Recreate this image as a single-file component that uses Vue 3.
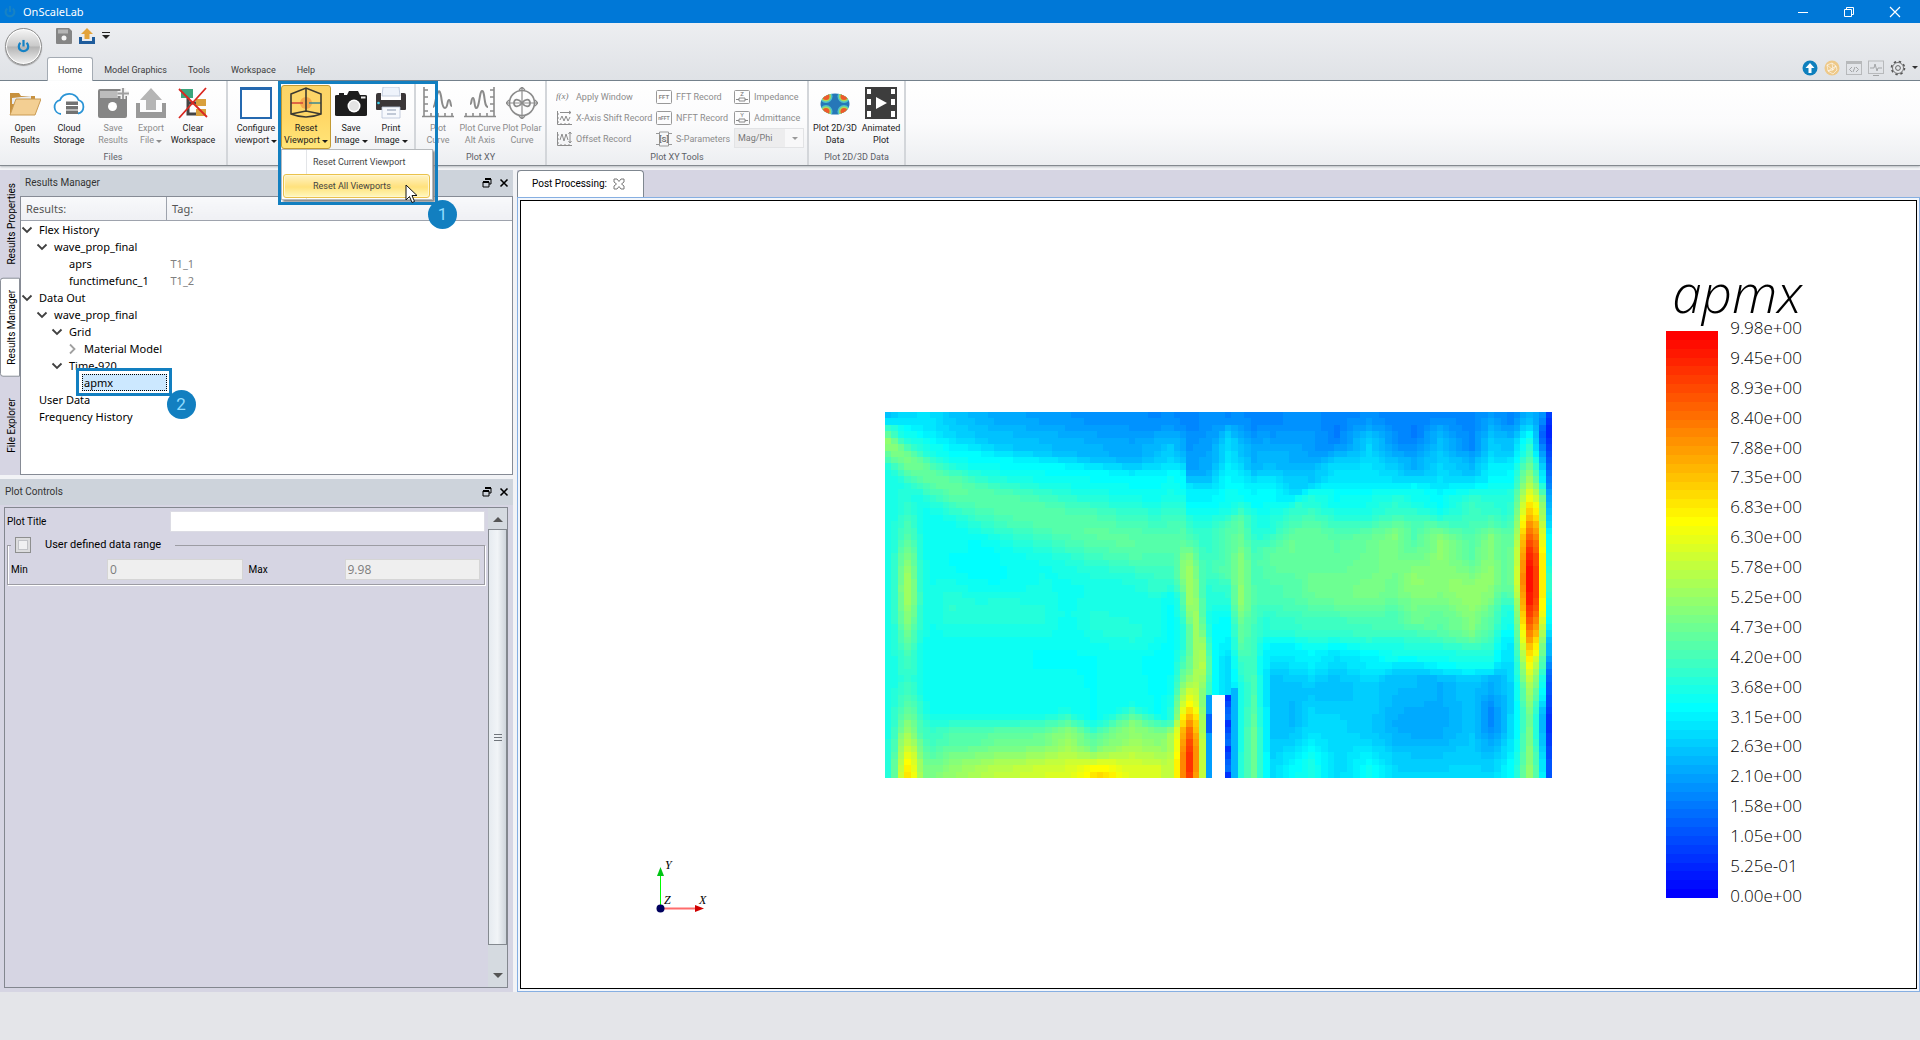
<template>
  <div class="app">
    <header class="titlebar">
      <svg class="titlebar-logo" viewBox="0 0 16 16" v-html="icons.power"></svg>
      <span class="titlebar-name">OnScaleLab</span>
      <div class="window-buttons">
        <button aria-label="Minimize">
          <svg viewBox="0 0 12 12"><path d="M1 6.500h10" stroke="#fff" /></svg>
        </button>
        <button aria-label="Restore">
          <svg viewBox="0 0 12 12" fill="none" stroke="#fff">
            <path d="M1.500 3.500h7v7h-7zM3.500 3.500v-2h7v7h-2" />
          </svg>
        </button>
        <button aria-label="Close">
          <svg viewBox="0 0 12 12">
            <path d="M1 1l10 10M11 1L1 11" stroke="#fff" stroke-width="1.200" />
          </svg>
        </button>
      </div>
    </header>

    <div class="topbar">
      <button class="app-button" aria-label="Application menu">
        <svg viewBox="0 0 16 16" v-html="icons.power"></svg>
      </button>
      <div class="topbar-rows">
        <div class="quick-access">
          <button aria-label="Save">
            <svg viewBox="0 0 16 16">
              <path d="M0 1q0-1 1-1h12l3 3v12q0 1-1 1H1q-1 0-1-1z" fill="#858585" />
              <path d="M2 1.500h10v4H2z" fill="#b5b5b5" />
              <circle cx="8" cy="10" r="2.500" fill="#f4f4f4" />
            </svg>
          </button>
          <button aria-label="Export">
            <svg viewBox="0 0 16 16">
              <path d="M0 9h3v4h10V9h3v7H0z" fill="#1f5c9c" />
              <path d="M8 0l6 6h-3.500v5h-5V6H2z" fill="#e3a33b" />
            </svg>
          </button>
          <button class="qat-more" aria-label="Customize">
            <svg viewBox="0 0 8 8">
              <path d="M0 .5h8" stroke="#222" />
              <path d="M0 3h8L4 7z" fill="#222" />
            </svg>
          </button>
        </div>
        <nav class="menu-tabs">
          <a
            v-for="(tab, i) in menuTabs"
            :key="tab"
            href="#"
            :class="{ active: i === 0 }"
            >{{ tab }}</a
          >
        </nav>
      </div>
      <div class="status-icons">
        <button v-for="s in statusIcons" :key="s.name" :aria-label="s.name">
          <svg viewBox="0 0 16 16" v-html="s.art"></svg>
        </button>
        <svg class="status-caret" viewBox="0 0 6 4"><path d="M0 0h6L3 3z" fill="#333" /></svg>
      </div>
    </div>

    <div class="ribbon">
      <section class="group">
        <div class="group-body">
          <button
            v-for="b in fileButtons"
            :key="b.icon"
            class="big-button"
            :class="b.size"
            :disabled="b.off"
          >
            <svg viewBox="0 0 32 32" v-html="icons[b.icon]"></svg>
            <span>{{ b.top }}</span>
            <span>{{ b.bottom }}<i v-if="b.menu" class="caret"></i></span>
          </button>
        </div>
        <h2>Files</h2>
      </section>

      <section class="group">
        <div class="group-body">
          <button
            v-for="b in viewButtons"
            :key="b.icon"
            class="big-button"
            :class="[b.size, { pressed: b.pressed }]"
          >
            <svg viewBox="0 0 32 32" v-html="icons[b.icon]"></svg>
            <span>{{ b.top }}</span>
            <span>{{ b.bottom }}<i class="caret"></i></span>
          </button>
        </div>
        <div class="dropdown">
          <button>Reset Current Viewport</button>
          <button class="hovered">Reset All Viewports</button>
        </div>
        <div class="callout callout-menu"><span class="badge">1</span></div>
        <svg class="cursor" viewBox="0 0 13 20">
          <path
            d="M1 1v15l3.500-3.500 2.500 6 2.500-1-2.500-6H12z"
            fill="#fff"
            stroke="#111"
          />
        </svg>
      </section>

      <section class="group">
        <div class="group-body flush">
          <button
            v-for="b in plotButtons"
            :key="b.icon"
            class="big-button"
            :class="b.size"
            disabled
          >
            <svg viewBox="0 0 32 32" v-html="icons[b.icon]"></svg>
            <span>{{ b.top }}</span>
            <span>{{ b.bottom }}</span>
          </button>
        </div>
        <h2>Plot XY</h2>
      </section>

      <section class="group">
        <div class="tool-grid">
          <button v-for="t in tools" :key="t.label" class="tool" disabled>
            <svg viewBox="0 0 16 16" v-html="t.art"></svg>{{ t.label }}
          </button>
          <div class="select-wrap">
            <select aria-label="S-Parameters format" disabled>
              <option>Mag/Phi</option>
            </select>
            <span><i class="caret"></i></span>
          </div>
        </div>
        <h2>Plot XY Tools</h2>
      </section>

      <section class="group">
        <div class="group-body flush">
          <button
            v-for="b in dataButtons"
            :key="b.icon"
            class="big-button"
            :class="b.size"
          >
            <svg viewBox="0 0 32 32" v-html="icons[b.icon]"></svg>
            <span>{{ b.top }}</span>
            <span>{{ b.bottom }}</span>
          </button>
        </div>
        <h2>Plot 2D/3D Data</h2>
      </section>
    </div>

    <main class="workspace">
      <aside class="dock">
        <div class="dock-top">
          <div class="side-tabs">
            <button>Results Properties</button>
            <button class="active">Results Manager</button>
            <button>File Explorer</button>
          </div>
          <section class="results">
            <header class="panel-head">
              <span>Results Manager</span>
              <button aria-label="Float"><svg viewBox="0 0 10 10" v-html="icons.float"></svg></button>
              <button aria-label="Close"><svg viewBox="0 0 10 10" v-html="icons.cross"></svg></button>
            </header>
            <div class="tree-frame">
              <table class="tree">
                <thead>
                  <tr>
                    <th>Results:</th>
                    <th>Tag:</th>
                  </tr>
                </thead>
                <tbody>
                  <tr v-for="(row, i) in rows" :key="i">
                    <td>
                      <div class="node" :class="['level-' + row.level, { selected: row.selected }]">
                        <svg class="arrow" viewBox="0 0 12 12">
                          <path
                            v-if="row.state === 'open'"
                            d="M1.500 3.500L6 8l4.500-4.500"
                            fill="none"
                            stroke="#404040"
                            stroke-width="1.800"
                          />
                          <path
                            v-if="row.state === 'closed'"
                            d="M4 1.500L8.500 6 4 10.500"
                            fill="none"
                            stroke="#a0a0a0"
                            stroke-width="1.800"
                          />
                        </svg>
                        <span>{{ row.name }}</span>
                        <div v-if="row.selected" class="callout callout-node">
                          <b class="badge">2</b>
                        </div>
                      </div>
                    </td>
                    <td class="tag">{{ row.tag }}</td>
                  </tr>
                </tbody>
              </table>
            </div>
          </section>
        </div>

        <section class="controls">
          <header class="panel-head">
            <span>Plot Controls</span>
            <button aria-label="Float"><svg viewBox="0 0 10 10" v-html="icons.float"></svg></button>
            <button aria-label="Close"><svg viewBox="0 0 10 10" v-html="icons.cross"></svg></button>
          </header>
          <div class="controls-frame">
            <form class="form" @submit.prevent>
              <div class="title-row">
                <label for="plot-title">Plot Title</label>
                <input id="plot-title" v-model="plotTitle" type="text" />
              </div>
              <fieldset>
                <legend>
                  <input id="user-range" v-model="userRange" type="checkbox" />
                  <label for="user-range">User defined data range</label>
                </legend>
                <div class="range-row">
                  <label for="range-min">Min</label>
                  <input id="range-min" type="text" value="0" :disabled="!userRange" />
                  <label for="range-max">Max</label>
                  <input id="range-max" type="text" value="9.98" :disabled="!userRange" />
                </div>
              </fieldset>
            </form>
            <div class="scrollbar">
              <button aria-label="Scroll up">
                <svg viewBox="0 0 10 6"><path d="M0 6l5-5 5 5z" fill="#555" /></svg>
              </button>
              <div class="thumb"><i></i></div>
              <button class="down" aria-label="Scroll down">
                <svg viewBox="0 0 10 6"><path d="M0 0l5 5 5-5z" fill="#555" /></svg>
              </button>
            </div>
          </div>
        </section>
      </aside>

      <section class="document">
        <div class="doc-tabs">
          <div class="doc-tab">
            <span>Post Processing:</span>
            <button aria-label="Close tab">
              <svg viewBox="0 0 12 12">
                <path
                  d="M1 1h3l2 2.500L8 1h3v3L8.500 6 11 8v3H8L6 8.500 4 11H1V8l2.500-2L1 4z"
                  fill="#fff"
                  stroke="#777"
                />
              </svg>
            </button>
          </div>
        </div>
        <div class="doc-frame">
          <div class="viewport">
            <canvas ref="plot" class="heatmap" :width="COLS" :height="ROWS"></canvas>
            <div class="legend">
              <div class="legend-title">apmx</div>
              <div class="legend-body">
                <div class="legend-bar">
                  <i v-for="(c, i) in bands" :key="i" :style="{ background: c }"></i>
                </div>
                <ol class="legend-labels">
                  <li v-for="l in legendLabels" :key="l">{{ l }}</li>
                </ol>
              </div>
            </div>
            <svg class="axes" viewBox="0 0 60 60">
              <path d="M11.500 50V15" stroke="#0f0" />
              <path d="M8 17l3.500-9L15 17z" fill="#00c414" />
              <path d="M12 49.500h36" stroke="#ff6c6c" stroke-width="2" />
              <path d="M46 46l9 3.500-9 3.500z" fill="#d00000" />
              <circle cx="11.500" cy="49.500" r="4" fill="#00005e" />
              <g font-family="Liberation Serif, serif" font-style="italic" font-size="12">
                <text x="16" y="10">Y</text>
                <text x="15" y="45">Z</text>
                <text x="50" y="45">X</text>
              </g>
            </svg>
          </div>
        </div>
      </section>
    </main>
    <footer class="statusbar"></footer>
  </div>
</template>

<script setup>
import { ref, onMounted } from "vue";

const plot = ref(null);
const plotTitle = ref("");
const userRange = ref(false);

const menuTabs = ["Home", "Model Graphics", "Tools", "Workspace", "Help"];

const icons = {
  power:
    '<path d="M4.800 4.200a5 5 0 1 0 6.400 0" fill="none" stroke="#1682c5" stroke-width="2.400"/><path d="M8 1v7" stroke="#1682c5" stroke-width="2.400"/>',
  float:
    '<path d="M3 1h6v5H7M1 4h6v5H1z" fill="none" stroke="#000"/><path d="M3 1h6M1 4h6" stroke="#000" stroke-width="2"/>',
  cross: '<path d="M1.500 1.500l7 7M8.500 1.500l-7 7" stroke="#000" stroke-width="1.600"/>',
  open: '<path d="M1 6h9l2 3h14v6H6L2 26H1z" fill="#c7913f"/><path d="M3 11l19-2v8H3z" fill="#e9edf2"/><path d="M7 12h25l-6 16H1z" fill="#f3cf93" stroke="#c99a52"/>',
  cloud:
    '<path d="M8 27a7 7 0 0 1-1-13.800A10 10 0 0 1 25.500 13 7 7 0 0 1 25 26.500" fill="#fff" stroke="#2a94d6" stroke-width="1.800"/><path d="M13 14.500h12v3.500H13zM13 19h12v3.500H13zM13 23.500h12V27H13z" fill="#727272"/>',
  save: '<path d="M1 4q0-2 2-2h24v6h3v21q0 2-2 2H3q-2 0-2-2z" fill="#858585"/><path d="M3 4h18v7H3z" fill="#bcbcbc"/><circle cx="15.500" cy="19.500" r="4.500" fill="#fff"/><path d="M26 1v11M20.500 6.500H32" stroke="#f2f2f2" stroke-width="5"/><path d="M26 1v11M20.500 6.500H32" stroke="#a0a0a0" stroke-width="2"/>',
  exportFile:
    '<path d="M1 16h4v9h22v-9h4v15H1z" fill="#999"/><path d="M16 1l11 12h-6v10H11V13H5z" fill="#b5b5b5"/>',
  clear:
    '<path d="M11 10v17h9M11 16h9" fill="none" stroke="#444" stroke-width="3"/><path d="M4 2h12v9H4z" fill="#3ca57c"/><path d="M19 12h10v7H19zM19 22h10v7H19z" fill="#d9a03d"/><path d="M2 2l28 28M29 1L2 31" stroke="#da2720" stroke-width="1.800"/>',
  configure:
    '<path d="M1 1h30v30H1z" fill="#fff" stroke="#2569b0" stroke-width="2"/><path d="M0 1.500h32" stroke="#2569b0" stroke-width="3"/>',
  reset:
    '<circle cx="16" cy="16" r="6" fill="#f6a94c"/><path d="M1 16h12" stroke="#d84b3c" stroke-width="1.600"/><path d="M19 16h12" stroke="#4a8c8e" stroke-width="1.600"/><path d="M1 7l15-6 15 6v20q-15 6-30 0zM16 1v24M1 27l15-3 15 3" fill="none" stroke="#3c3a30" stroke-width="1.600"/>',
  camera:
    '<path d="M0 9q0-1 2-1h10l2-4h9l2 4h5q2 0 2 1v19q0 1-2 1H2q-2 0-2-1z" fill="#1d1d1d"/><path d="M4 6h5v3H4z" fill="#1d1d1d"/><circle cx="19" cy="19" r="6.500" fill="#fff"/><circle cx="19" cy="19" r="5" fill="#e4e4e4"/><path d="M26 9.500h4.500v2H26z" fill="#eee"/>',
  printer:
    '<path d="M8 0h16l1 9H7z" fill="#eef3fb" stroke="#b6c2d6" stroke-width=".8"/><path d="M1 8q0-2 2-2h3v7h20V6h3q2 0 2 2v14q0 1-1 1h-5v-2H7v2H2q-1 0-1-1z" fill="#3b3738"/><circle cx="3.500" cy="16" r="1.300" fill="#3bd0ee"/><path d="M7 20h18v11H7z" fill="#f7f9fd" stroke="#b6c2d6" stroke-width=".8"/><path d="M12 23h9M12 27h9" stroke="#8b99b0"/>',
  curve:
    '<path d="M2 0v30M0 29.500h32M2 3h4M2 10h4M2 17h4M2 24h4M9 30v-4M16 30v-4M23 30v-4M30 30v-4" fill="none" stroke="#8b8b8b" stroke-width="1.600"/><path d="M11 20c2 0 2-6 4-12s3-4 4 1 1 12 4 12 2-8 4-8 1 6 3 6" fill="none" stroke="#8b8b8b" stroke-width="2"/>',
  curveAlt:
    '<path d="M30 0v30M0 29.500h32M26 3h4M26 10h4M26 17h4M26 24h4M2 30v-4M9 30v-4M16 30v-4M23 30v-4" fill="none" stroke="#8b8b8b" stroke-width="1.600"/><path d="M6 17c2 0 1-6 3-6s1 9 3 10 3-6 4-12 3-7 4-1 1 12 4 12" fill="none" stroke="#8b8b8b" stroke-width="2"/>',
  polar:
    '<circle cx="16" cy="16" r="12.500" fill="none" stroke="#8b8b8b" stroke-width="1.600"/><path d="M16 0v32M0 16h32M13 3l3-3 3 3M13 29l3 3 3-3M3 13l-3 3 3 3M29 13l3 3-3 3" fill="none" stroke="#8b8b8b" stroke-width="1.200"/><path d="M16 16c-3-4-8-5-8 0s5 4 8 0 8-5 8 0-5 4-8 0z" fill="none" stroke="#8b8b8b" stroke-width="1.800"/>',
  plot3d:
    '<clipPath id="drum"><ellipse cx="16" cy="17" rx="14.500" ry="10.500"/></clipPath><g clip-path="url(#drum)"><path d="M0 0h32v32H0z" fill="#2677b8"/><g fill="#4fc3c9"><circle cx="7" cy="9.500" r="6.500"/><circle cx="25" cy="9.500" r="6.500"/><circle cx="7" cy="24.500" r="6.500"/><circle cx="25" cy="24.500" r="6.500"/></g><g fill="#a8dc5a"><circle cx="7" cy="9.500" r="5"/><circle cx="25" cy="9.500" r="5"/><circle cx="7" cy="24.500" r="5"/><circle cx="25" cy="24.500" r="5"/></g><g fill="#ee5a2c"><circle cx="7" cy="9.500" r="3.500"/><circle cx="25" cy="9.500" r="3.500"/><circle cx="7" cy="24.500" r="3.500"/><circle cx="25" cy="24.500" r="3.500"/></g></g>',
  film: '<path d="M0 0h32v32H0z" fill="#3d3d3d"/><path d="M2 2h4v5H2zM2 12h4v6H2zM2 24h4v6H2zM26 2h4v5h-4zM26 12h4v6h-4zM26 24h4v6h-4z" fill="#fff"/><path d="M11 10l11 6-11 6z" fill="#fff"/>',
};

const boxed = (label, size) =>
  `<rect x=".5" y="1.500" width="15" height="13" rx="1" fill="none" stroke="#999"/><text x="8" y="10" text-anchor="middle" font-family="Roboto, sans-serif" font-weight="700" font-size="${size}" fill="#888">${label}</text>`;

const meter = (label) =>
  `<rect x=".5" y="1.500" width="15" height="13" rx="1" fill="none" stroke="#999"/><text x="8" y="7" text-anchor="middle" font-family="Roboto, sans-serif" font-size="6" fill="#777">${label}</text><path d="M2 10.500h3m6 0h3M5 9h6v3H5z" fill="none" stroke="#888"/>`;

const statusIcons = [
  {
    name: "Update",
    art: '<circle cx="8" cy="8" r="7.500" fill="#0f80bd"/><path d="M8 3l4.500 5H9.500v5h-3V8H3.500z" fill="#fff"/>',
  },
  {
    name: "Network",
    art: '<circle cx="8" cy="8" r="7.500" fill="#eec989"/><path d="M3 5l5-2 4 3-3 4-5 1zM8 3l1 7M3 5l6 5M12 6L4 11l5 3 4-4z" fill="none" stroke="#fff" stroke-width=".6"/>',
  },
  {
    name: "Script",
    art: '<rect x=".5" y="1.500" width="15" height="13" fill="none" stroke="#b7b9bb"/><path d="M0 2.500h16" stroke="#b7b9bb" stroke-width="3"/><path d="M6 7L3.500 9.500 6 12m4-5l2.500 2.500L10 12M9 7l-2 5" fill="none" stroke="#a3a5a7"/>',
  },
  {
    name: "Monitor",
    art: '<rect x=".5" y="1" width="15" height="12.500" fill="none" stroke="#b7b9bb"/><path d="M2 8h4l1-4 2 7 1-3h4M5 15.500h6" fill="none" stroke="#a3a5a7"/>',
  },
  {
    name: "Settings",
    art: '<circle cx="8" cy="8" r="6.500" fill="none" stroke="#555" stroke-width="1.600" stroke-dasharray="2.400 2.705"/><circle cx="8" cy="8" r="5.500" fill="#e6e8eb" stroke="#555" stroke-width=".8"/><circle cx="8" cy="8" r="2.400" fill="none" stroke="#555" stroke-width=".9"/>',
  },
];

const fileButtons = [
  { icon: "open", top: "Open", bottom: "Results", size: "w-44" },
  { icon: "cloud", top: "Cloud", bottom: "Storage", size: "w-44" },
  { icon: "save", top: "Save", bottom: "Results", size: "w-44", off: true },
  { icon: "exportFile", top: "Export", bottom: "File", size: "w-32", off: true, menu: true },
  { icon: "clear", top: "Clear", bottom: "Workspace", size: "w-52" },
];

const viewButtons = [
  { icon: "configure", top: "Configure", bottom: "viewport", size: "w-50" },
  { icon: "reset", top: "Reset", bottom: "Viewport", size: "w-50", pressed: true },
  { icon: "camera", top: "Save", bottom: "Image", size: "w-40" },
  { icon: "printer", top: "Print", bottom: "Image", size: "w-40" },
];

const plotButtons = [
  { icon: "curve", top: "Plot", bottom: "Curve", size: "w-44" },
  { icon: "curveAlt", top: "Plot Curve", bottom: "Alt Axis", size: "w-40" },
  { icon: "polar", top: "Plot Polar", bottom: "Curve", size: "w-44" },
];

const dataButtons = [
  { icon: "plot3d", top: "Plot 2D/3D", bottom: "Data", size: "w-52" },
  { icon: "film", top: "Animated", bottom: "Plot", size: "w-40" },
];

const tools = [
  {
    label: "Apply Window",
    art: '<text x="0" y="10" font-family="Liberation Serif, serif" font-style="italic" font-size="9" fill="#777">f(x)</text>',
  },
  { label: "FFT Record", art: boxed("FFT", 6) },
  { label: "Impedance", art: meter("Z") },
  {
    label: "X-Axis Shift Record",
    art: '<path d="M1.500 1v13.500H16M1 4h2M1 8h2M1 12h2M5 15v-2M9 15v-2M13 15v-2M4 2.500h11M13 1l2 1.500L13 4" fill="none" stroke="#8c8c8c"/><path d="M4 10l2-4 2 5 2-5 2 5 2-4" fill="none" stroke="#8c8c8c"/>',
  },
  { label: "NFFT Record", art: boxed("nFFT", 5) },
  { label: "Admittance", art: meter("Y") },
  {
    label: "Offset Record",
    art: '<path d="M1.500 1v13.500H16M1 4h2M1 8h2M1 12h2M5 15v-2M9 15v-2M13 15v-2M14 1v11M12.500 3L14 1l1.500 2M12.500 10l1.500 2 1.500-2" fill="none" stroke="#8c8c8c"/><path d="M4 9l2-6 2 7 2-7 2 6" fill="none" stroke="#8c8c8c"/>',
  },
  {
    label: "S-Parameters",
    art: '<path d="M0 2.500h3m10 0h3M0 13.500h3m10 0h3M3.500 1h9v14h-9z" fill="none" stroke="#999"/><text x="8" y="11" text-anchor="middle" font-family="Roboto, sans-serif" font-weight="700" font-size="8" fill="#777">[S]</text>',
  },
];

const rows = [
  { name: "Flex History", level: 0, state: "open" },
  { name: "wave_prop_final", level: 1, state: "open" },
  { name: "aprs", level: 2, tag: "T1_1" },
  { name: "functimefunc_1", level: 2, tag: "T1_2" },
  { name: "Data Out", level: 0, state: "open" },
  { name: "wave_prop_final", level: 1, state: "open" },
  { name: "Grid", level: 2, state: "open" },
  { name: "Material Model", level: 3, state: "closed" },
  { name: "Time-920", level: 2, state: "open" },
  { name: "apmx", level: 3, selected: true },
  { name: "User Data", level: 0 },
  { name: "Frequency History", level: 0 },
];

const legendLabels = [
  "9.98e+00", "9.45e+00", "8.93e+00", "8.40e+00", "7.88e+00",
  "7.35e+00", "6.83e+00", "6.30e+00", "5.78e+00", "5.25e+00",
  "4.73e+00", "4.20e+00", "3.68e+00", "3.15e+00", "2.63e+00",
  "2.10e+00", "1.58e+00", "1.05e+00", "5.25e-01", "0.00e+00",
];

// blue -> cyan -> yellow -> red in 64 steps
const STEPS = 64;
const STOPS = [
  [0, 0, 255],
  [0, 255, 255],
  [255, 255, 0],
  [255, 0, 0],
];

const colorAt = (value) => {
  const t = Math.max(0, Math.min(1, value));
  const q = Math.round(t * (STEPS - 1)) / (STEPS - 1);
  const pos = q * 3;
  const i = Math.min(2, Math.floor(pos));
  const f = pos - i;
  return STOPS[i].map((v, k) => Math.round(v + (STOPS[i + 1][k] - v) * f));
};

const bands = Array.from(
  { length: STEPS },
  (_, i) => `rgb(${colorAt(1 - i / (STEPS - 1)).join(",")})`
);

const COLS = 104;
const ROWS = 57;

// column, then row/value pairs down that column (value in percent of the range)
const profiles = [
  [0, 0,26, 1,30, 2,40, 4,52, 9,37, 20,36, 30,36, 37,36, 42,36, 50,36, 56,36],
  [2, 0,28, 1,30, 2,35, 6,49, 11,36, 20,35, 30,35, 37,35, 42,35, 50,37, 56,40],
  [5, 0,30, 2,31, 4,36, 8,47, 14,35, 22,35, 30,36, 37,35, 42,35, 48,38, 56,47],
  [7, 0,29, 2,30, 5,35, 9.5,46, 16,35, 22,35, 30,36, 37,34.5, 46,35, 50,41, 56,49],
  [10, 0,26, 3,28, 6,34, 11,46, 18,34.5, 23,34, 30,39, 37,34.5, 46,34.5, 50,44, 56,53],
  [14, 0,24, 3,26, 7,34, 12.5,45, 20.5,34, 25,34, 31,38, 37,34.5, 46,34.5, 50,44, 56,56],
  [17, 0,22, 4,26, 7.5,34, 13.5,45, 22,34, 25,33.5, 30,38, 37,34.5, 46,34.5, 50,46, 56,58],
  [24, 0,21, 5,25, 8.5,34, 15.5,45, 24,35.5, 26,36, 31,38, 37,34, 46,34.5, 50,47, 56,61],
  [28, 0,20, 5,24, 9,34, 17,45, 25,36, 27,35, 31,35, 38,34, 45,35, 50,53, 56,62],
  [32, 0,19, 6,24, 9.5,34, 18,45.5, 26,37, 28,36, 32,38, 38,34, 47,34, 51,46, 56,66],
  [38, 0,19, 6,22, 10.5,34, 20,45.5, 27,37, 29,36, 34,38, 38,35, 44,35, 49,52, 56,62],
  [42, 0,18, 6,25, 10,33, 20,44, 27,40, 29,36, 34,36, 39,33, 46,34, 50,50, 56,62],
  [44, 0,19, 7,28, 10,35, 20,44, 26,40, 29,34, 34,33, 40,32.5, 47,34, 50,50, 56,54],
  [46, 0,17, 5,22, 10,33, 18,42, 24,44, 29,38, 34,34, 40,36, 45,40, 50,46, 56,50],
  [47, 0,17, 8,21, 12,31, 18,38, 24,43, 29,40, 34,36, 40,36, 45,40, 50,46, 56,50],
  [50, 0,19, 8,22, 13,32, 18,39, 24,41, 28,38, 33,34, 38,34, 42,34, 46,34, 56,34],
  [53, 0,18, 4,29, 14,35, 18,44, 24,45, 28,39, 33,33, 39,29, 43,28, 48,30, 56,32],
  [55, 0,19, 6,26, 12,34, 17,46, 24,51, 29,52, 34,46, 39,40, 43,36, 50,37, 56,38],
  [57, 0,17, 7,23, 12,32, 17,38, 23,43, 28,44, 33,42, 40,42, 45,44, 50,48, 56,47],
  [58.5, 0,18, 7,24, 12,33, 17,36, 22,44, 28,43, 33,38, 38,32, 42,33, 50,35, 56,36],
  [60, 0,17, 7,24, 12,33, 17,38, 22,46, 28,43, 33,39, 37,31, 42,25, 50,26, 56,29],
  [63, 0,19, 7,23, 12,28, 15,40, 20,47, 28,44, 33,40, 37,31, 43,25, 47,24, 56,33],
  [66, 0,19, 6,21, 10,26, 13,38, 18,46, 27,47, 33,41, 38,32, 43,26, 48,29, 56,37],
  [70, 0,17, 3,16, 8,29, 13,34, 20,45, 28,48, 33,41, 38,29, 42,25, 48,28, 56,28],
  [75, 0,19, 5,28, 9,30, 14,36, 20,47, 28,49, 33,42, 39,31, 43,27, 49,27, 56,35],
  [79, 0,17, 4,19, 9,28, 14,39, 19,50, 27,48, 32,43, 37,36, 41,25, 48,23, 56,28],
  [82, 0,17, 3,16, 8,23, 12,35, 18,43, 26,52, 31,48, 36,38, 41,25, 48,22, 56,28],
  [86, 0,18, 4,25, 9,29, 14,34, 20,52, 26,51, 33,45, 38,35, 42,23, 48,22, 56,28],
  [91, 0,17, 4,17, 8,24, 14,41, 22,45, 28,53, 33,50, 38,37, 42,26, 48,26, 56,28],
  [94, 0,21, 5,27, 9,32, 14,39, 20,51, 26,52, 32,45, 38,37, 42,22, 47,17, 56,28],
  [97, 0,17, 5,25, 9,32, 14,37, 20,42, 26,42, 31,32, 36,27, 42,26, 48,27, 56,33],
  [100, 0,22, 5,33, 9,37, 14,40, 20,40, 26,38, 31,38, 36,38, 42,38, 48,36, 56,34],
  [102, 0,18, 3,10, 9,22, 14,36, 20,38, 26,36, 31,36, 36,30, 42,26, 48,18, 56,24],
  [103, 0,7, 2,4, 9,11, 14,18, 20,24, 26,27, 31,24, 36,17, 42,8, 48,5, 56,10],
];

// narrow spots laid over the profiles: column, row, column spread, row spread, amount
const spots = [
  [3, 27, 1.2, 7, 19],
  [3, 57, 1.3, 7.5, 27],
  [33.5, 57, 1.8, 1.8, 7],
  [46.8, 24, 1, 4, 9],
  [47.5, 29, 0.9, 3, 9],
  [48.3, 34, 0.9, 3, 13],
  [49, 39, 0.9, 3, 15],
  [47.1, 53, 1.5, 8, 45],
  [100.3, 26, 1.5, 10, 62],
  [100.2, 57, 1.3, 6.5, 18],
];

const profileAt = (col, row) => {
  let n = 0;
  while (n < profiles.length - 2 && profiles[n + 1][0] <= col) n++;
  const a = profiles[n];
  const b = profiles[n + 1];
  const f = (col - a[0]) / (b[0] - a[0]);
  const knots = a.slice(1).map((v, i) => v + (b[i + 1] - v) * f);
  for (let k = 0; k < knots.length - 2; k += 2) {
    const [r0, v0, r1, v1] = knots.slice(k, k + 4);
    if (row <= r1) {
      const s = (row - r0) / (r1 - r0);
      return v0 + (v1 - v0) * s * s * (3 - 2 * s);
    }
  }
  return knots[knots.length - 1];
};

const valueAt = (col, row) => {
  if (row >= 44 && col === 50) return row > 46 && row < 50 ? 13 : 21;
  if (row >= 44 && col === 53) return 6 + (row % 4) * 3;
  if (row >= 43 && col === 54) return 24;
  let v = profileAt(col, row);
  for (const [c, r, sc, sr, amount] of spots) {
    v += amount * Math.exp(-((col - c) ** 2) / (2 * sc * sc) - (row - r) ** 2 / (2 * sr * sr));
  }
  return v;
};

onMounted(() => {
  const ctx = plot.value.getContext("2d");
  for (let row = 0; row < ROWS; row++) {
    for (let col = 0; col < COLS; col++) {
      // the slot in the geometry holds no data
      if (row >= 44 && (col === 51 || col === 52)) continue;
      ctx.fillStyle = `rgb(${colorAt(valueAt(col, row) / 100).join(",")})`;
      ctx.fillRect(col, row, 1, 1);
    }
  }
});
</script>

<style>
body {
  margin: 0;
}
</style>

<style scoped>
.app {
  min-height: 100vh;
  display: flex;
  flex-direction: column;
  background: #e4e5e9;
  color: #1c1c1c;
  font: 10px/12px Roboto, "Liberation Sans", sans-serif;
}

button {
  margin: 0;
  padding: 0;
  border: 0;
  background: none;
  font: inherit;
  color: inherit;
}

svg {
  display: block;
  flex-shrink: 0;
}

/* Title bar */
.titlebar {
  height: 23px;
  display: flex;
  align-items: center;
  background: #0078d7;
  color: #fff;
}

.titlebar-logo {
  width: 14px;
  height: 14px;
  margin: 0 6px 0 3px;
}

.titlebar-name {
  flex: 1;
  font: 11px/16px "Noto Sans", sans-serif;
}

.window-buttons {
  display: flex;
  padding-right: 2px;
}

.window-buttons button {
  width: 46px;
  height: 21px;
  display: grid;
  place-items: center;
}

.window-buttons svg {
  width: 12px;
  height: 12px;
}

/* Quick access and menu tabs */
.topbar {
  height: 57px;
  display: flex;
  background: linear-gradient(#edeef1, #dfe2e6);
  border-bottom: 1px solid #6f7c88;
}

.app-button {
  width: 37px;
  height: 37px;
  margin: 5px 5px 0;
  box-sizing: border-box;
  border: 1px solid #8d8d8d;
  border-radius: 50%;
  background: linear-gradient(#f6f6f6, #c9c9c9 49%, #b4b4b4 51%, #f1f1f1);
  box-shadow: inset 0 0 0 1px #fff, 0 1px 1px #999;
  display: grid;
  place-items: center;
}

.app-button svg {
  width: 15px;
  height: 15px;
}

.topbar-rows {
  flex: 1;
  display: flex;
  flex-direction: column;
  justify-content: space-between;
}

.quick-access {
  display: flex;
  align-items: center;
  gap: 7px;
  padding: 5px 0 0 9px;
}

.quick-access svg {
  width: 16px;
  height: 16px;
}

.quick-access .qat-more svg {
  width: 8px;
  height: 8px;
}

.menu-tabs {
  display: flex;
  gap: 1px;
  margin-bottom: -1px;
}

.menu-tabs a {
  height: 23px;
  padding: 0 9px;
  border: 1px solid transparent;
  border-bottom: 0;
  color: #3b3b3b;
  text-decoration: none;
  font-size: 9px;
  line-height: 24px;
}

.menu-tabs a.active {
  padding: 0 10px;
  background: #fff;
  border-color: #a4abb3;
  border-radius: 3px 3px 0 0;
}

.status-icons {
  display: flex;
  align-items: center;
  gap: 6px;
  align-self: flex-end;
  padding: 0 2px 4px 0;
}

.status-icons button svg {
  width: 16px;
  height: 16px;
}

.status-caret {
  width: 6px;
  height: 4px;
}

/* Ribbon */
.ribbon {
  height: 84px;
  position: relative;
  z-index: 2;
  display: flex;
  background: linear-gradient(#fff, #fbfbfc 50%, #eceef1);
  border-bottom: 1px solid #83898f;
  box-shadow: 0 1px 2px #b9bdc2;
}

.group {
  position: relative;
  display: flex;
  flex-direction: column;
  border-right: 2px solid #d3d6da;
}

.group h2 {
  margin: 0;
  text-align: center;
  font-size: 9px;
  font-weight: 400;
  line-height: 14px;
  color: #5c6067;
}

.group-body {
  height: 69px;
  padding: 4px 3px 0;
  box-sizing: border-box;
  display: flex;
}

.group:first-child .group-body {
  padding-right: 7px;
}

.group-body.flush {
  padding-left: 0;
  padding-right: 1px;
}

.group:last-child .group-body {
  padding-right: 3px;
}

.big-button {
  height: 64px;
  box-sizing: border-box;
  border: 1px solid transparent;
  display: flex;
  flex-direction: column;
  align-items: center;
  font-size: 9px;
  white-space: nowrap;
}

.big-button svg {
  width: 32px;
  height: 32px;
  margin: 1px 0 3px;
}

.big-button:disabled,
.tool:disabled {
  color: #8c8c8c;
}

.big-button.pressed {
  border-color: #c29a33;
  border-radius: 3px;
  background: linear-gradient(#fbd468, #ffd766 50%, #ffe579);
}

.w-32 { width: 32px; }
.w-40 { width: 40px; }
.w-44 { width: 44px; }
.w-50 { width: 50px; }
.w-52 { width: 52px; }

.caret {
  display: inline-block;
  margin-left: 2px;
  border: 3px solid transparent;
  border-top-color: currentColor;
  border-bottom: 0;
}

.tool-grid {
  height: 69px;
  box-sizing: border-box;
  padding: 5px 3px 0 9px;
  display: grid;
  grid-template-columns: 100px 78px 70px;
  grid-auto-rows: 21px;
}

.tool {
  display: flex;
  align-items: center;
  gap: 4px;
  font-size: 9px;
  white-space: nowrap;
}

.tool svg {
  width: 16px;
  height: 16px;
}

.select-wrap {
  height: 20px;
  display: flex;
  background: #ededee;
  border: 1px solid #e2e3e5;
  box-sizing: border-box;
}

.select-wrap select {
  flex: 1;
  min-width: 0;
  padding: 0 3px;
  border: 0;
  appearance: none;
  background: none;
  color: #777;
  font-family: inherit;
  font-size: 9px;
  opacity: 1;
}

.select-wrap span {
  width: 18px;
  display: grid;
  place-items: center;
  background: #f8f8f9;
  color: #999;
}

.dropdown {
  position: absolute;
  left: 53px;
  top: 68px;
  width: 152px;
  height: 51px;
  box-sizing: border-box;
  padding: 0 2px 1px 1px;
  border: 1px solid #b7babd;
  background: linear-gradient(90deg, #fff 24px, #e3e5e8 24px, #e3e5e8 25px, #fff 25px);
  box-shadow: 2px 2px 2px #888;
}

.dropdown button {
  display: block;
  width: 100%;
  height: 24px;
  padding-left: 29px;
  border: 1px solid transparent;
  text-align: left;
  font-size: 9px;
  color: #444;
}

.dropdown button.hovered {
  border-color: #eac24c;
  border-radius: 3px;
  background: linear-gradient(#fff3c4, #ffe282 50%, #ffe27c 55%, #fff8bd);
  box-shadow: inset 0 0 0 1px #fff6d2;
}

.callout {
  position: absolute;
  box-sizing: border-box;
  border: 3px solid #127fc0;
  pointer-events: none;
}

.callout-menu {
  left: 50px;
  top: 0;
  width: 160px;
  height: 124px;
  z-index: 1;
}

.badge {
  position: absolute;
  left: 100%;
  top: 100%;
  width: 29px;
  height: 29px;
  margin: -2px 0 0 -7px;
  border-radius: 50%;
  background: #127fc0;
  color: #8fdcff;
  text-align: center;
  font: 17px/29px Roboto, sans-serif;
}

.cursor {
  position: absolute;
  left: 177px;
  top: 103px;
  width: 13px;
  height: 20px;
  z-index: 2;
}

/* Workspace */
.workspace {
  flex: 1;
  display: flex;
  gap: 4px;
  padding-top: 4px;
  background: #f2f3f6;
}

.dock {
  width: 513px;
  display: flex;
  flex-direction: column;
  gap: 4px;
}

.dock-top {
  height: 305px;
  display: flex;
}

.side-tabs {
  width: 20px;
  display: flex;
  flex-direction: column;
  background: #d6d5e3;
}

.side-tabs button {
  height: 100px;
  padding-right: 4px;
  border: 1px solid transparent;
  box-sizing: border-box;
  writing-mode: vertical-rl;
  transform: rotate(180deg);
  text-align: center;
  color: #000;
}

.side-tabs button:first-child {
  height: 109px;
}

.side-tabs button.active {
  background: #fff;
  border-color: #8a8f98;
  border-radius: 0 3px 3px 0;
}

.results {
  flex: 1;
  display: flex;
  flex-direction: column;
}

.panel-head {
  height: 26px;
  display: flex;
  align-items: center;
  gap: 7px;
  padding: 0 4px 0 5px;
  background: #cdd3db;
  color: #333;
}

.panel-head span {
  flex: 1;
}

.panel-head svg {
  width: 10px;
  height: 10px;
}

.tree-frame {
  flex: 1;
  border: 1px solid #868b95;
  background: #fff;
}

.tree {
  width: 100%;
  border-collapse: collapse;
  table-layout: fixed;
  color: #000;
  font: 11px/17px "Noto Sans", sans-serif;
}

.tree th {
  height: 23px;
  padding: 0 5px;
  border-bottom: 1px solid #9ea3ad;
  background: linear-gradient(#f8f9fb, #eff0f4);
  text-align: left;
  font-weight: 400;
  color: #555;
}

.tree th:first-child {
  width: 135px;
  border-right: 1px solid #9ea3ad;
}

.tree td {
  height: 17px;
  padding: 0;
}

.tree .tag {
  padding-left: 4px;
  color: #808080;
}

.node {
  position: relative;
  display: flex;
  align-items: center;
  white-space: nowrap;
}

.arrow {
  width: 12px;
  height: 12px;
  margin-right: 6px;
}

.level-1 { margin-left: 15px; }
.level-2 { margin-left: 30px; }
.level-3 { margin-left: 45px; }

.node.selected {
  margin-left: 61px;
}

.node.selected .arrow {
  display: none;
}

.node.selected span {
  flex: 1;
  padding-left: 1px;
  border: 1px dotted #000;
  background: #cce8ff;
  line-height: 15px;
}

.callout-node {
  left: -6px;
  right: -5px;
  top: -6px;
  height: 28px;
  z-index: 1;
}

.callout-node .badge {
  margin: -3px 0 0 -2px;
}

/* Plot controls */
.controls {
  flex: 1;
  display: flex;
  flex-direction: column;
  background: #d6d5e3;
}

.controls-frame {
  flex: 1;
  display: flex;
  margin: 2px 5px 4px 4px;
  border: 1px solid #83878f;
}

.form {
  flex: 1;
  min-width: 0;
  padding: 3px 3px 3px 2px;
  color: #000;
}

.title-row {
  display: flex;
  align-items: center;
}

.title-row label {
  width: 163px;
}

.title-row input {
  flex: 1;
}

input[type="text"] {
  width: 0;
  height: 21px;
  min-width: 0;
  box-sizing: border-box;
  padding: 0 2px;
  border: 1px solid #dcdce4;
  background: #fff;
  font: 12px/16px "Open Sans", sans-serif;
}

input[type="text"]:disabled {
  border-color: #d5d5d5;
  background: #efefef;
  color: #7d7d7d;
}

fieldset {
  min-width: 0;
  margin: 5px 0 0;
  padding: 0 4px 4px 3px;
  border: 1px solid #9c9ca3;
  box-shadow: inset 1px 0 #fff, 1px 1px #fff;
}

legend {
  display: flex;
  align-items: center;
  padding: 0 14px 0 4px;
  font-size: 11px;
}

legend input {
  width: 16px;
  height: 16px;
  margin: 0 14px 0 0;
  appearance: none;
  border: 1px solid #8e8f8f;
  background: #f0f0f2;
  box-shadow: inset 0 0 0 2px #dcdcde, inset 0 0 0 3px #c2c3c8;
}

.range-row {
  display: flex;
  align-items: center;
  padding-top: 6px;
}

.range-row label {
  width: 96px;
  box-sizing: border-box;
}

.range-row input {
  flex: 1;
}

.range-row input + label {
  width: 102px;
  padding-left: 6px;
}

.scrollbar {
  width: 19px;
  display: flex;
  flex-direction: column;
  background: #d5dae0;
}

.scrollbar button {
  height: 21px;
  display: grid;
  place-items: center;
}

.scrollbar .down {
  height: 42px;
  padding-top: 20px;
}

.scrollbar svg {
  width: 10px;
  height: 6px;
}

.thumb {
  flex: 1;
  display: grid;
  place-items: center;
  border: 1px solid #84898f;
  background: linear-gradient(90deg, #e6ebf0, #f1f4f7 50%, #cfd5dc);
}

.thumb i {
  width: 8px;
  height: 7px;
  background: repeating-linear-gradient(#70757b 0 1px, transparent 1px 3px);
}

/* Document area */
.document {
  flex: 1;
  min-width: 0;
  display: flex;
  flex-direction: column;
}

.doc-tabs {
  height: 27px;
  display: flex;
  background: #d6d5e3;
}

.doc-tab {
  display: flex;
  align-items: center;
  gap: 6px;
  padding: 0 18px 0 14px;
  border: 1px solid #7f8790;
  border-bottom: 0;
  border-radius: 4px 4px 0 0;
  background: #fff;
  color: #000;
}

.doc-tab svg {
  width: 12px;
  height: 12px;
}

.doc-frame {
  flex: 1;
  display: flex;
  padding: 2px;
  border: 1px solid #86afe2;
  background: #f2f6fc;
}

.viewport {
  flex: 1;
  position: relative;
  display: grid;
  grid-template-columns: 1fr auto 1fr;
  align-items: center;
  border: 1px solid #000;
  background: #fff;
}

.heatmap {
  grid-column: 2;
  width: 667px;
  height: 366px;
  image-rendering: pixelated;
}

.legend {
  justify-self: end;
  align-self: start;
  padding: 60px 114px 0 0;
  color: #000;
}

.legend-title {
  padding: 0 0 6px 6px;
  font: italic 300 53px/64px "Open Sans", sans-serif;
}

.legend-body {
  display: flex;
  gap: 12px;
}

.legend-bar {
  width: 52px;
  height: 567px;
  display: flex;
  flex-direction: column;
}

.legend-bar i {
  flex: 1;
}

.legend-labels {
  display: flex;
  flex-direction: column;
  justify-content: space-between;
  margin: -13px 0 -8px;
  padding: 0;
  list-style: none;
  font: 300 17px/20px "Open Sans", sans-serif;
}

.axes {
  position: absolute;
  left: 128px;
  bottom: 69px;
  width: 60px;
  height: 60px;
}

.statusbar {
  height: 48px;
  background: #e4e5e9;
}
</style>
